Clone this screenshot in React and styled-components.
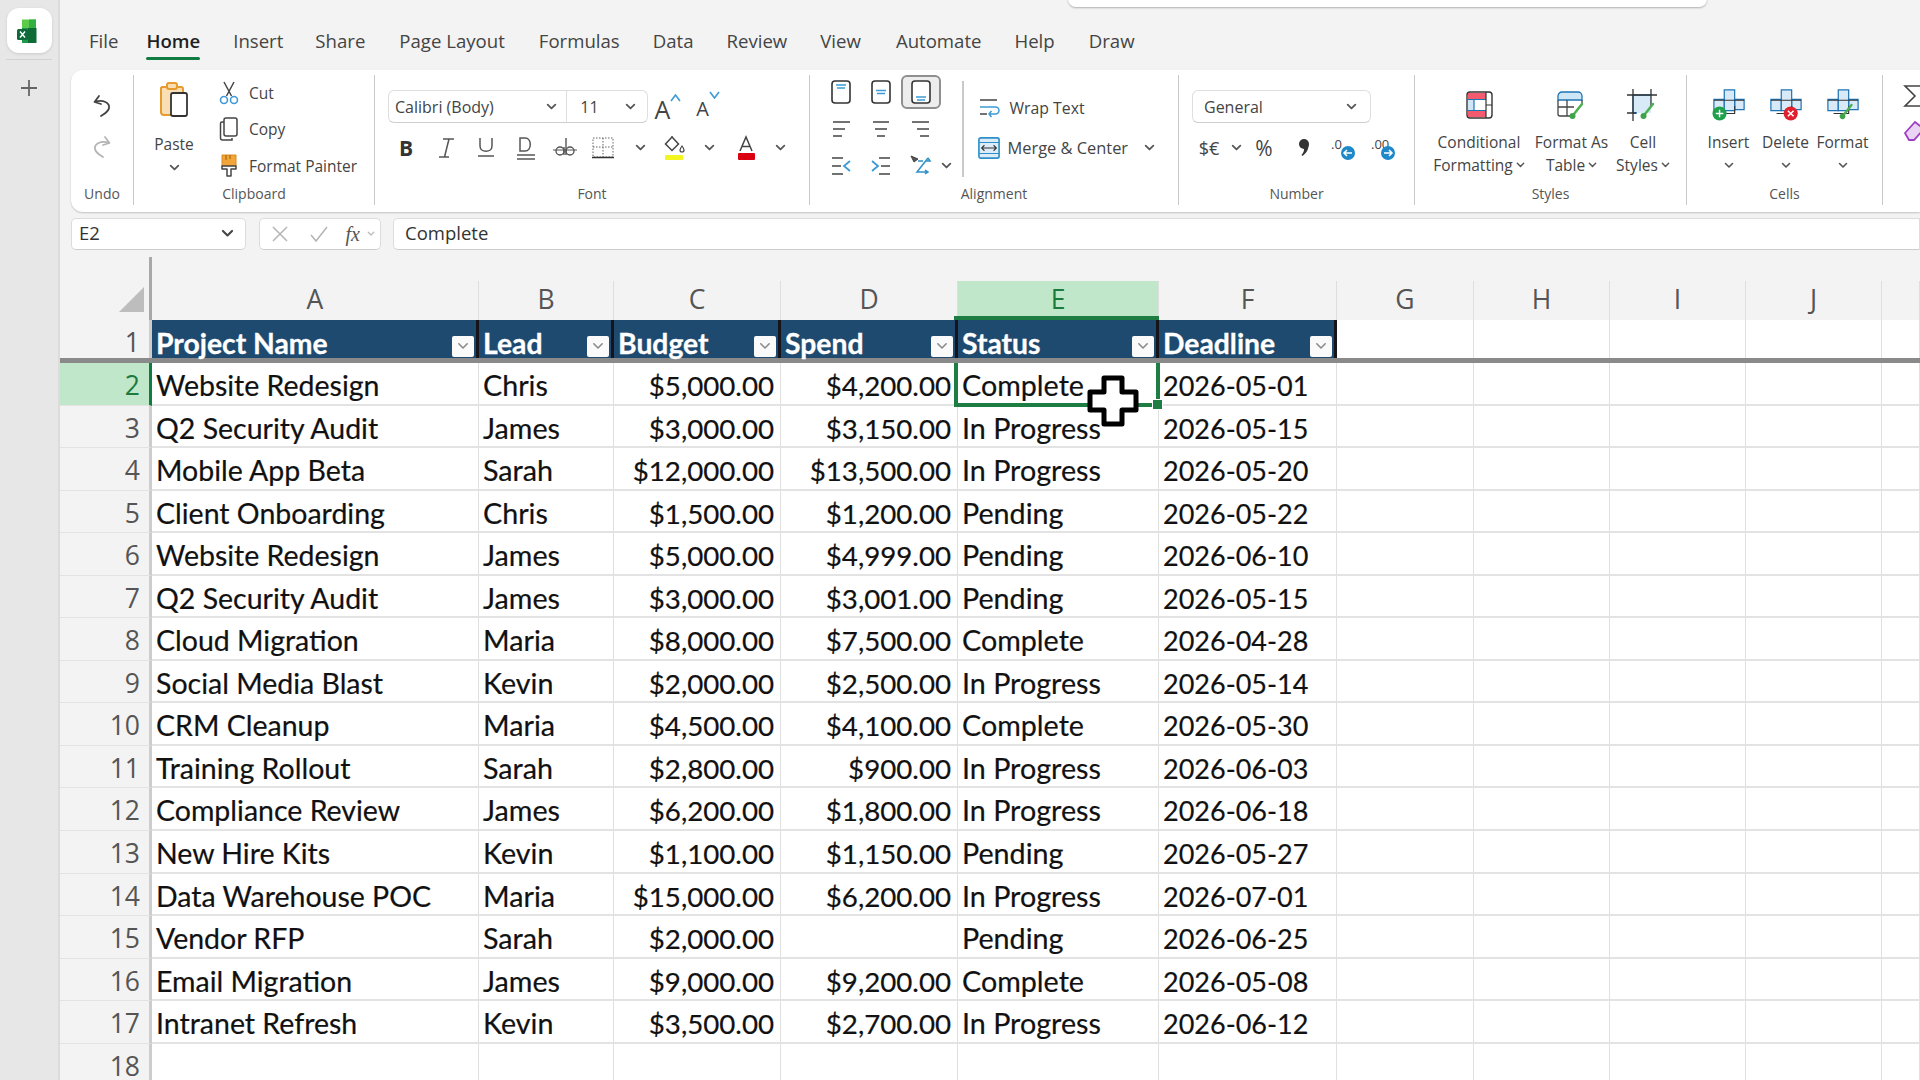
import React from "react";
import styled, { createGlobalStyle } from "styled-components";

const Global = createGlobalStyle`
  html, body { margin: 0; padding: 0; background: #f3f3f3; overflow: hidden; }
  * { box-sizing: border-box; }
  #root { width: 1920px; height: 1080px; }
`;
const UI = `"Open Sans", "Noto Sans", sans-serif`;
const CELL = `Lato, "Liberation Sans", sans-serif`;
const COLS = "92px 327px 135px 167px 177px 201px 178px 137px 136px 136px 136px 1fr";

const Page = styled.div`
  position: relative; display: flex; width: 1920px; height: 1080px; overflow: hidden;
  font-family: ${UI}; background: #f3f3f3; color: #333;
`;
const Sidebar = styled.aside`
  width: 60px; flex: none; background: #e7e7e7; border-right: 2px solid #dcdcdc;
  display: flex; flex-direction: column; align-items: center; padding-top: 8px;
`;
const AppTile = styled.div`
  width: 45px; height: 45px; background: #fff; border-radius: 12px; display: flex;
  align-items: center; justify-content: center; box-shadow: 0 1px 3px rgba(0,0,0,.12);
`;
const SideRule = styled.div`width: 46px; height: 1px; background: #d2d2d2; margin-top: 6px;`;
const AddButton = styled.div`margin-top: 19px; color: #6b6b6b; display: flex;`;
const Main = styled.main`flex: 1; min-width: 0; display: flex; flex-direction: column;`;
const TopPopup = styled.div`
  position: absolute; left: 1068px; top: -10px; width: 639px; height: 17px; background: #fff;
  border-radius: 8px; box-shadow: 0 1px 2px rgba(0,0,0,.28);
`;
const TabBar = styled.nav`height: 70px; padding: 28px 0 0 29px; display: flex; flex: none;`;
const Tab = styled.div`
  position: relative; height: 26px; line-height: 26px; margin-right: ${p => p.$gap}px; font-size: 18.6px;
  color: ${p => (p.$active ? "#1f1f1f" : "#444")}; font-weight: ${p => (p.$active ? 600 : 400)};
  &::after {
    content: ""; display: ${p => (p.$active ? "block" : "none")}; position: absolute; left: 0; right: 0; bottom: -6px;
    height: 3px; background: #107c41; border-radius: 2px;
  }
`;
const Ribbon = styled.section`
  flex: none; margin-left: 11px; height: 142px; padding: 5px 0 7px; background: #fff; display: flex;
  border-radius: 12px 0 0 12px; box-shadow: 0 1px 2px rgba(0,0,0,.2); overflow: hidden;
`;
const Group = styled.div`
  flex: none; width: ${p => p.$w}px; display: flex; flex-direction: column;
  border-right: ${p => (p.$last ? "none" : "1.5px solid #c9c9c9")};
`;
const GroupBody = styled.div`height: 108px; display: flex; padding-left: ${p => p.$pl || 0}px;`;
const GroupLabel = styled.div`height: 22px; line-height: 22px; text-align: center; font-size: 14px; color: #555;`;
const UndoColumn = styled.div`flex: 1; display: flex; flex-direction: column; align-items: center; padding-top: 16px; gap: 11px;`;
const IconSlot = styled.div`
  flex: none; width: ${p => p.$w || 30}px; height: ${p => p.$h || 30}px; display: flex; align-items: center; justify-content: center;
`;
const PasteButton = styled.div`width: 80px; flex: none; display: flex; flex-direction: column; align-items: center; padding-top: 5px;`;
const PasteIconSlot = styled.div`height: 40px; margin-bottom: 13px; display: flex; align-items: center;`;
const BigLabel = styled.div`font-size: 15.5px; line-height: 23px; color: #444; text-align: center; white-space: nowrap;`;
const SmallStack = styled.div`display: flex; flex-direction: column; gap: 3.5px; padding: 1px 0 0 5px;`;
const SmallRow = styled.div`height: 34px; display: flex; align-items: center; gap: 10px; font-size: 15.5px; color: #444; white-space: nowrap;`;
const Column = styled.div`display: flex; flex-direction: column;`;
const SelectRow = styled.div`display: flex; margin-top: 15px; height: 33px; align-items: center;`;
const FieldBox = styled.div`
  width: ${p => p.$w}px; height: 33px; display: flex; background: #fff; border: 1.5px solid #dedede; border-radius: 6px;
  border-bottom-color: #cfcfcf; font-size: 16px; color: #444;
`;
const FieldPart = styled.div`
  width: ${p => p.$w}px; display: flex; align-items: center; justify-content: space-between;
  padding: 0 ${p => p.$pr || 9}px 0 ${p => p.$pl || 6}px; border-right: ${p => (p.$split ? "1.5px solid #dedede" : "none")};
`;
const GrowButton = styled.div`
  flex: none; width: 40px; height: 33px; display: flex; align-items: flex-end; justify-content: center; color: #444;
  font-size: ${p => p.$size}px; line-height: 28px;
`;
const Caret = styled.svg`align-self: flex-start; margin-top: ${p => (p.$up ? 4 : 1)}px;`;
const ToolRow = styled.div`display: flex; height: 40px; margin-top: 5px; align-items: center; margin-left: ${p => p.$ml || 0}px;`;
const AlignGrid = styled.div`
  display: grid; grid-template-columns: repeat(3, 40px) 21px; grid-auto-rows: 34px; row-gap: 3px; width: 141px; flex: none;
`;
const AlignCell = styled.div`
  display: flex; align-items: center; justify-content: ${p => p.$start ? "flex-start" : "center"}; border-radius: 6px;
  ${p => p.$active ? "background:#ededed; border:2px solid #8f8f8f;" : ""}
`;
const InnerRule = styled.div`flex: none; width: 1.5px; height: 96px; margin-top: 6px; background: #c9c9c9;`;
const WrapColumn = styled.div`flex: 1; display: flex; flex-direction: column; padding: 12.5px 23px 0 14px;`;
const WrapRow = styled.div`height: 40px; display: flex; align-items: center; font-size: ${p => p.$size}px; color: #444; gap: ${p => p.$gap}px; white-space: nowrap;`;
const PushEnd = styled.div`margin-left: auto; display: flex;`;
const BigButton = styled.div`
  flex: none; width: ${p => p.$w}px; display: flex; flex-direction: column; align-items: center; padding-top: 13px;
`;
const BigIcon = styled.div`height: 34px; margin-bottom: 9px; display: flex; align-items: center; justify-content: center;`;
const Inline = styled.span`display: inline-flex; align-items: center; gap: 3px;`;
const CenterChevron = styled.div`height: 23px; display: flex; align-items: center; justify-content: center;`;
const EditColumn = styled.div`display: flex; flex-direction: column; padding: 8px 0 0 20px; gap: 9px;`;
const Glyph = styled.span`font-size: ${p => p.$size}px; color: #444;`;
const BoldB = styled.span`font: 700 21px ${UI}; color: #333;`;

const FormulaBar = styled.div`
  flex: none; margin: 6px 0 0 11px; height: 32px; display: flex; gap: 12.5px;
`;
const BarBox = styled.div`
  flex: ${p => (p.$fill ? "1" : "none")}; width: ${p => p.$w ? p.$w + "px" : "auto"}; background: #fff;
  border-radius: ${p => (p.$fill ? "5px 0 0 5px" : "5px")}; border: 1.5px solid #dcdcdc; border-bottom-color: #cccccc;
  display: flex; align-items: center; font-size: 18.5px; color: #333; padding: 0 0 3px ${p => p.$pl || 0}px;
`;
const NameChevron = styled.div`margin: 3px 11px 0 auto; display: flex;`;
const FxRow = styled.div`display: flex; align-items: center; margin-top: 3px;`;
const FxGlyph = styled.i`font: italic 20px "Liberation Serif", serif; color: #555; margin-left: 8px; width: 16px;`;

const Sheet = styled.div`flex: 1; min-height: 0; margin-top: 7px; display: flex; flex-direction: column;`;
const HeadRow = styled.div`display: grid; grid-template-columns: ${COLS}; height: 63px; flex: none;`;
const Corner = styled.div`
  border-right: 3px solid #a8a8a8; display: flex; align-items: flex-end; justify-content: flex-end; padding: 0 5px 8px 0;
`;
const Triangle = styled.div`
  width: 25px; height: 25px; background: #bdbdbd; clip-path: polygon(100% 0, 100% 100%, 0 100%);
`;
const ColHead = styled.div`
  align-self: end; height: 39px; line-height: 37px; text-align: center; font-size: 26.5px;
  border-right: 1.5px solid #dedede; white-space: nowrap;
  color: ${p => (p.$active ? "#1c7a3f" : "#555")}; background: ${p => (p.$active ? "#c1e7cb" : "transparent")};
`;
const Row = styled.div`
  display: grid; grid-template-columns: ${COLS}; grid-template-rows: minmax(0, 1fr); height: ${p => p.$h}px; flex: none; min-height: 0;
  ${p => p.$freeze ? "border-bottom: 5px solid #8a8a8a; position: relative; z-index: 1;" : ""}
`;
const RowNum = styled.div`
  min-height: 0; text-align: right; padding-right: 9px; font-size: 26.5px; line-height: ${p => p.$lh || 44}px;
  color: ${p => (p.$active ? "#1c7a3f" : "#555")};
  background: ${p => (p.$active ? "#c1e7cb" : "transparent")};
  border-bottom: ${p => p.$flat ? "none" : "1.5px solid #e3e3e3"};
  border-right: 3px solid ${p => (p.$active ? "#107c41" : "#cdcdcd")};
`;
const Cell = styled.div`
  position: relative; min-height: 0; background: #fff; border-right: 1.5px solid #e0e0e0; border-bottom: 2px solid #e3e3e3;
  font: 400 ${p => p.$size || 28.7}px/45px ${CELL}; color: #111; white-space: nowrap; padding: 0 6px 0 4px;
  -webkit-text-stroke: .2px #111;
  text-align: ${p => (p.$right ? "right" : "left")};
`;
const HeadCell = styled.div`
  position: relative; min-height: 0; background: #1f4a70; border-right: 3px solid #14141a; color: #fff;
  font: 700 28.3px/47px ${CELL}; white-space: nowrap; padding: 0 6px 0 4px; -webkit-text-stroke: .3px #fff;
  ${p => p.$topline ? `&::before { content:""; position:absolute; left:-4px; right:-3px; top:-4px; height:4px; background:#1e7d42; }` : ""}
`;
const BlankHead = styled.div`background: #fff; border-right: 1.5px solid #e0e0e0;`;
const FilterButton = styled.div`
  position: absolute; right: 2px; bottom: 1px; width: 22px; height: 21px; background: #fafafa; border-radius: 2px;
  display: flex; align-items: center; justify-content: center;
`;
const Selection = styled.div`
  position: absolute; left: -4px; right: -2px; top: 0; bottom: -3px; border: 4px solid #1e7d42; border-top: none; pointer-events: none; z-index: 2;
`;
const Handle = styled.div`
  position: absolute; right: -6px; bottom: -6px; width: 9px; height: 9px; background: #1e7d42; outline: 1px solid #fff;
`;
const Cursor = styled.svg`position: absolute; left: 1087px; top: 375px; z-index: 5; filter: blur(.3px);`;

/* --- icons --- */
const Chev = ({ s = 11, c = "#555", w = 1.6 }) => (
  <svg width={s} height={s * 0.7} viewBox="0 0 10 7"><path d="M1.5 1.5 5 5 8.5 1.5" fill="none" stroke={c} strokeWidth={w} strokeLinecap="round" strokeLinejoin="round" /></svg>
);
const Excel = () => (
  <svg width="26" height="26" viewBox="0 0 26 26">
    <path d="M6 1.5h14v9H6z" fill="#5ccb4a" />
    <path d="M13 1.5h7v9h-7z" fill="#33b044" />
    <path d="M6 10h8v15H6z" fill="#1f9a48" />
    <path d="M12 10h8.500v15H12z" fill="#0f6b36" />
    <rect x="1" y="11" width="11" height="11" rx="1.500" fill="#0e6a3a" />
    <path d="M4 13.500 9 19.500M9 13.500 4 19.500" stroke="#fff" strokeWidth="1.400" />
  </svg>
);
const Plus = () => <svg width="18" height="18" viewBox="0 0 18 18"><path d="M9 1v16M1 9h16" stroke="#666" strokeWidth="1.800" /></svg>;
const Undo = ({ c = "#444", flip }) => (
  <svg width="24" height="26" viewBox="0 0 24 26" style={flip ? { transform: "scaleX(-1)" } : undefined}>
    <path d="M9 3 4.500 9l6.500 2M5 9c8-3 15 1 14 6-.7 4-5 6-8 8" fill="none" stroke={c} strokeWidth="1.800" strokeLinecap="round" strokeLinejoin="round" />
  </svg>
);
const PasteIcon = () => (
  <svg width="30" height="38" viewBox="0 0 30 38">
    <path d="M3 6h19a2 2 0 0 1 2 2v24a2 2 0 0 1-2 2H5a3 3 0 0 1-3-3V7z" fill="#f9dfb3" stroke="#e79a2d" strokeWidth="2" />
    <rect x="8" y="2" width="10" height="6" rx="2" fill="#f9dfb3" stroke="#e79a2d" strokeWidth="2" />
    <rect x="12" y="12" width="16" height="23" rx="2" fill="#fff" stroke="#333" strokeWidth="1.800" />
  </svg>
);
const CutIcon = () => (
  <svg width="20" height="24" viewBox="0 0 20 24">
    <path d="M5 1 12.500 15M15 1 7.500 15" stroke="#444" strokeWidth="1.500" fill="none" />
    <circle cx="5" cy="19" r="3.500" fill="none" stroke="#3d9ad6" strokeWidth="1.600" />
    <circle cx="15" cy="19" r="3.500" fill="none" stroke="#3d9ad6" strokeWidth="1.600" />
  </svg>
);
const CopyIcon = () => (
  <svg width="20" height="24" viewBox="0 0 20 24" fill="none" stroke="#444" strokeWidth="1.500">
    <rect x="5" y="1" width="13" height="18" rx="2" />
    <path d="M5 5H3a1.500 1.500 0 0 0-1.500 1.500V21A2 2 0 0 0 3.500 23H13v-2" />
  </svg>
);
const PainterIcon = () => (
  <svg width="20" height="24" viewBox="0 0 20 24">
    <path d="M3 1h14v11H3z" fill="#f2a63a" stroke="#d98a20" strokeWidth="1" />
    <path d="M7 1v5M11 1v4" stroke="#a86a10" strokeWidth="1.200" />
    <path d="M3 12h14v3H12v7H8v-7H3z" fill="#fff" stroke="#444" strokeWidth="1.500" strokeLinejoin="round" />
  </svg>
);
const GrowA = ({ up, size }) => (
  <GrowButton $size={size}>
    A
    <Caret $up={up} width="11" height="8" viewBox="0 0 11 8">
      <path d={up ? "M1 7l4.500-6L10 7" : "M1 1l4.500 6L10 1"} fill="none" stroke="#3d9ad6" strokeWidth="1.600" />
    </Caret>
  </GrowButton>
);
const Ital = () => (
  <svg width="22" height="24" viewBox="0 0 22 24"><path d="M7 3h11M13 3 8.500 21M3 21h10" fill="none" stroke="#555" strokeWidth="1.500" /></svg>
);
const Under = ({ dbl, letter }) => (
  <svg width="20" height="26" viewBox="0 0 20 26" fill="none" stroke="#555" strokeWidth="1.500">
    {letter === "D"
      ? <path d="M4 3v13h5c7 0 7-13 0-13z" />
      : <path d="M4 3v8c0 7 12 7 12 0V3" />}
    <path d={dbl ? "M1 20h18M1 24h18" : "M2 21h16"} />
  </svg>
);
const Strike = () => (
  <svg width="26" height="24" viewBox="0 0 26 24" fill="none" stroke="#555" strokeWidth="1.400">
    <circle cx="8" cy="15" r="4" /><path d="M12 11v8" /><circle cx="18" cy="15" r="4" /><path d="M14 2v17" />
    <path d="M1 14h24" strokeWidth="1.200" />
  </svg>
);
const Borders = () => (
  <svg width="22" height="22" viewBox="0 0 22 22" fill="none" stroke="#666" strokeWidth="1" strokeDasharray="1.500 1.500">
    <rect x="1" y="1" width="20" height="19" /><path d="M11 1v19M1 10h20" /><path d="M0 20.500h22" stroke="#333" strokeWidth="1.500" strokeDasharray="none" />
  </svg>
);
const FillIcon = () => (
  <svg width="22" height="26" viewBox="0 0 22 26">
    <path d="M8 2 14.500 9 8 15.500 1.500 9zM8 2l0-1" fill="none" stroke="#444" strokeWidth="1.500" />
    <path d="M18 11c-1.500 2-2 3-2 4a2 2 0 0 0 4 0c0-1-.5-2-2-4z" fill="none" stroke="#444" strokeWidth="1.200" />
    <rect x="1" y="20" width="18" height="5" rx="1" fill="#f3f51f" />
  </svg>
);
const ColorA = () => (
  <svg width="20" height="26" viewBox="0 0 20 26">
    <path d="M4 16 10 2l6 14M6 11.500h8" fill="none" stroke="#444" strokeWidth="1.500" />
    <rect x="2" y="18" width="17" height="7" rx="1" fill="#db0011" />
  </svg>
);
const VAlign = ({ pos }) => (
  <svg width="20" height="24" viewBox="0 0 20 24">
    <rect x="1" y="1" width="18" height="22" rx="3" fill="#fff" stroke="#333" strokeWidth="1.600" />
    <path d={pos === 0 ? "M5 5h10M6 8h8" : pos === 1 ? "M5 10.500h10M6 13.500h8" : "M5 17h10M6 20h8"} stroke="#3d9ad6" strokeWidth="1.500" />
  </svg>
);
const HAlign = ({ pos }) => {
  const l = pos === 0 ? "M2 4h17M2 11h12M2 18h9" : pos === 1 ? "M2 4h16M4 11h12M6 18h8" : "M1 4h17M6 11h12M9 18h9";
  return <svg width="20" height="22" viewBox="0 0 20 22"><path d={l} stroke="#444" strokeWidth="1.500" fill="none" /></svg>;
};
const Indent = ({ inc }) => (
  <svg width="22" height="22" viewBox="0 0 22 22" fill="none" strokeWidth="1.500">
    {inc ? (<>
      <path d="M9 3h11M11 11h9M9 19h11" stroke="#444" />
      <path d="M2 6l6 5-6 5" stroke="#3d9ad6" strokeWidth="1.800" />
    </>) : (<>
      <path d="M2 3h11M2 11h9M2 19h11" stroke="#444" />
      <path d="M20 6l-6 5 6 5" stroke="#3d9ad6" strokeWidth="1.800" />
    </>)}
  </svg>
);
const Orient = () => (
  <svg width="24" height="24" viewBox="0 0 24 24" fill="none" strokeWidth="1.500">
    <path d="M2 2l7 3-4 3z" fill="#555" stroke="#444" strokeWidth="1" />
    <path d="M9 7 14 7M19 4 8 18h11M16 20l3-2-3-2M17 7h4l-2-3" stroke="#2e90c8" />
  </svg>
);
const WrapIcon = () => (
  <svg width="22" height="20" viewBox="0 0 22 20" fill="none" strokeWidth="1.500">
    <path d="M2 2h17M2 16h7" stroke="#444" /><path d="M2 9h15.500a3.500 3.500 0 0 1 0 7H11M13.500 13 11 16l2.500 3" stroke="#3d9ad6" />
  </svg>
);
const MergeIcon = () => (
  <svg width="24" height="24" viewBox="0 0 24 24" fill="none">
    <rect x="1" y="1" width="22" height="22" rx="2" fill="#dcecf8" stroke="#2e90c8" strokeWidth="1.800" />
    <path d="M1 6h22M1 18h22" stroke="#2e90c8" strokeWidth="1.200" />
    <path d="M4 12h16M7 9l-3 3 3 3M17 9l3 3-3 3" stroke="#333" strokeWidth="1.200" />
  </svg>
);
const Comma = () => (
  <svg width="14" height="20" viewBox="0 0 14 20">
    <circle cx="7" cy="6" r="5" fill="#333" />
    <path d="M11.500 6c.5 5-2 9-6 12l-1-1c2-2 3-5 2.500-8z" fill="#333" />
  </svg>
);
const Decimal = ({ t, dir }) => (
  <svg width="30" height="28" viewBox="0 0 30 28">
    <text x="1" y="15" fontFamily={UI} fontSize="13" fill="#444">{t}</text>
    <circle cx="18" cy="19" r="7" fill="#1e88c8" />
    <path d={dir < 0 ? "M22 19h-8M17 16l-3 3 3 3" : "M14 19h8M19 16l3 3-3 3"} fill="none" stroke="#fff" strokeWidth="1.500" />
  </svg>
);
const CondIcon = () => (
  <svg width="27" height="28" viewBox="0 0 27 28">
    <rect x="1" y="1" width="25" height="26" rx="3" fill="#fff" stroke="#333" strokeWidth="1.400" />
    <path d="M2 2h18v6H2zM2 20h18v6H2z" fill="#f45b6e" />
    <path d="M2 9h6v10H2z" fill="#cfe6f7" />
    <path d="M1 8.500h19M1 19.500h19M8 8.500v11" stroke="#1f74b5" strokeWidth="1.200" />
    <path d="M20 1v26M20 14h6" stroke="#333" strokeWidth="1.200" />
  </svg>
);
const Brush = ({ x = 0, y = 0 }) => (
  <g transform={`translate(${x} ${y})`}>
    <path d="M13 1 5 11" stroke="#4caf50" strokeWidth="2.500" strokeLinecap="round" />
    <circle cx="3.500" cy="13" r="3" fill="#3fa34a" />
  </g>
);
const TableIcon = () => (
  <svg width="30" height="30" viewBox="0 0 30 30">
    <path d="M1 6a4 4 0 0 1 4-4h16a4 4 0 0 1 4 4v4H1z" fill="#cfe6f7" stroke="#1f74b5" strokeWidth="1.300" />
    <path d="M1 10v14a2 2 0 0 0 2 2h10M25 10v3M1 17h16M10 10v16" fill="none" stroke="#444" strokeWidth="1.300" />
    <Brush x={12} y={13} />
  </svg>
);
const StylesIcon = () => (
  <svg width="32" height="32" viewBox="0 0 32 32">
    <rect x="6" y="6" width="18" height="18" fill="#d8eaf8" />
    <path d="M6 6h18M6 24h4M6 6v18" fill="none" stroke="#1f74b5" strokeWidth="1.300" />
    <path d="M0 6h30M24 0v17M6 0v32M0 24h9" fill="none" stroke="#333" strokeWidth="1.300" />
    <Brush x={13} y={14} />
  </svg>
);
const CrossBase = ({ children }) => (
  <svg width="34" height="34" viewBox="0 0 36 36">
    <path d="M13 12H2v12h11zM24 12h10v11H24z" fill="#d8eaf8" stroke="#1f74b5" strokeWidth="1.300" />
    <path d="M13 2h11v22H13z" fill="#d8eaf8" stroke="#1f74b5" strokeWidth="1.300" />
    <path d="M2 13h32M8 27h16v-8" fill="none" stroke="#333" strokeWidth="1.200" />
    {children}
  </svg>
);
const InsertIcon = () => (
  <CrossBase>
    <circle cx="8" cy="27" r="7.500" fill="#1ea14a" />
    <path d="M8 23v8M4 27h8" stroke="#fff" strokeWidth="1.500" />
  </CrossBase>
);
const DeleteIcon = () => (
  <CrossBase>
    <circle cx="23" cy="27" r="7.500" fill="#e0202f" />
    <path d="M20 24l6 6M26 24l-6 6" stroke="#fff" strokeWidth="1.600" />
  </CrossBase>
);
const FormatIcon = () => (
  <CrossBase><Brush x={14} y={17} /></CrossBase>
);
const Sigma = () => <svg width="26" height="24" viewBox="0 0 26 24"><path d="M22 2H2l10 10L2 22h20" fill="none" stroke="#444" strokeWidth="1.600" /></svg>;
const Eraser = () => (
  <svg width="26" height="24" viewBox="0 0 26 24">
    <path d="M2 14 12 3l9 7-10 11H6z" fill="#e9d5f3" stroke="#a13fc4" strokeWidth="1.800" />
  </svg>
);

/* --- data --- */
const TABS = [
  ["File", 28], ["Home", 33], ["Insert", 32], ["Share", 34], ["Page Layout", 34], ["Formulas", 33], ["Data", 33],
  ["Review", 33], ["View", 35], ["Automate", 33], ["Help", 34], ["Draw", 0],
];
const LETTERS = ["A", "B", "C", "D", "E", "F", "G", "H", "I", "J", ""];
const HEADERS = ["Project Name", "Lead", "Budget", "Spend", "Status", "Deadline"];
const DATA = [
  ["Website Redesign", "Chris", "$5,000.00", "$4,200.00", "Complete", "2026-05-01"],
  ["Q2 Security Audit", "James", "$3,000.00", "$3,150.00", "In Progress", "2026-05-15"],
  ["Mobile App Beta", "Sarah", "$12,000.00", "$13,500.00", "In Progress", "2026-05-20"],
  ["Client Onboarding", "Chris", "$1,500.00", "$1,200.00", "Pending", "2026-05-22"],
  ["Website Redesign", "James", "$5,000.00", "$4,999.00", "Pending", "2026-06-10"],
  ["Q2 Security Audit", "James", "$3,000.00", "$3,001.00", "Pending", "2026-05-15"],
  ["Cloud Migration", "Maria", "$8,000.00", "$7,500.00", "Complete", "2026-04-28"],
  ["Social Media Blast", "Kevin", "$2,000.00", "$2,500.00", "In Progress", "2026-05-14"],
  ["CRM Cleanup", "Maria", "$4,500.00", "$4,100.00", "Complete", "2026-05-30"],
  ["Training Rollout", "Sarah", "$2,800.00", "$900.00", "In Progress", "2026-06-03"],
  ["Compliance Review", "James", "$6,200.00", "$1,800.00", "In Progress", "2026-06-18"],
  ["New Hire Kits", "Kevin", "$1,100.00", "$1,150.00", "Pending", "2026-05-27"],
  ["Data Warehouse POC", "Maria", "$15,000.00", "$6,200.00", "In Progress", "2026-07-01"],
  ["Vendor RFP", "Sarah", "$2,000.00", "", "Pending", "2026-06-25"],
  ["Email Migration", "James", "$9,000.00", "$9,200.00", "Complete", "2026-05-08"],
  ["Intranet Refresh", "Kevin", "$3,500.00", "$2,700.00", "In Progress", "2026-06-12"],
  ["", "", "", "", "", ""],
];
const BLANKS = [0, 1, 2, 3, 4];
const COL_SIZE = [28.5, 28.7, 27.7, 27.7, 28.7, 27];

const FontRow = [
  [40, <BoldB key="b">B</BoldB>], [41, <Ital key="i" />], [38, <Under key="u" />], [42, <Under key="d" dbl letter="D" />],
  [36, <Strike key="s" />], [40, <Borders key="bd" />], [34, <Chev key="c1" />], [36, <FillIcon key="f" />],
  [32, <Chev key="c2" />], [42, <ColorA key="a" />], [26, <Chev key="c3" />],
];
const NumRow = [
  [34, <Glyph key="d" $size={18}>$€</Glyph>], [20, <Chev key="c" />],
  [36, <Glyph key="p" $size={21}>%</Glyph>], [44, <Comma key="m" />],
  [38, <Decimal key="l" t=".0" dir={-1} />], [42, <Decimal key="r" t=".00" dir={1} />],
];

export default function App() {
  return (
    <>
      <Global />
      <Page>
        <Sidebar>
          <AppTile><Excel /></AppTile>
          <SideRule />
          <AddButton><Plus /></AddButton>
        </Sidebar>
        <Main>
          <TopPopup />
          <TabBar>
            {TABS.map(([t, g]) => <Tab key={t} $gap={g} $active={t === "Home"}>{t}</Tab>)}
          </TabBar>
          <Ribbon>
            <Group $w={63}>
              <GroupBody>
                <UndoColumn>
                  <IconSlot><Undo /></IconSlot>
                  <IconSlot><Undo c="#b5b5b5" flip /></IconSlot>
                </UndoColumn>
              </GroupBody>
              <GroupLabel>Undo</GroupLabel>
            </Group>
            <Group $w={241}>
              <GroupBody>
                <PasteButton>
                  <PasteIconSlot><PasteIcon /></PasteIconSlot>
                  <BigLabel>Paste</BigLabel>
                  <CenterChevron><Chev /></CenterChevron>
                </PasteButton>
                <SmallStack>
                  <SmallRow><IconSlot $w={20} $h={24}><CutIcon /></IconSlot>Cut</SmallRow>
                  <SmallRow><IconSlot $w={20} $h={24}><CopyIcon /></IconSlot>Copy</SmallRow>
                  <SmallRow><IconSlot $w={20} $h={24}><PainterIcon /></IconSlot>Format Painter</SmallRow>
                </SmallStack>
              </GroupBody>
              <GroupLabel>Clipboard</GroupLabel>
            </Group>
            <Group $w={435}>
              <GroupBody $pl={13}>
                <Column>
                  <SelectRow>
                    <FieldBox $w={260}>
                      <FieldPart $w={179} $split>Calibri (Body)<Chev /></FieldPart>
                      <FieldPart $w={80} $pl={13} $pr={11}>11<Chev /></FieldPart>
                    </FieldBox>
                    <GrowA up size={25} />
                    <GrowA size={20} />
                  </SelectRow>
                  <ToolRow $ml={-2}>
                    {FontRow.map(([w, ic], i) => <IconSlot key={i} $w={w} $h={30}>{ic}</IconSlot>)}
                  </ToolRow>
                </Column>
              </GroupBody>
              <GroupLabel>Font</GroupLabel>
            </Group>
            <Group $w={369}>
              <GroupBody $pl={11}>
                <AlignGrid>
                  <AlignCell><VAlign pos={0} /></AlignCell>
                  <AlignCell><VAlign pos={1} /></AlignCell>
                  <AlignCell $active><VAlign pos={2} /></AlignCell>
                  <span />
                  <AlignCell><HAlign pos={0} /></AlignCell>
                  <AlignCell><HAlign pos={1} /></AlignCell>
                  <AlignCell><HAlign pos={2} /></AlignCell>
                  <span />
                  <AlignCell><Indent /></AlignCell>
                  <AlignCell><Indent inc /></AlignCell>
                  <AlignCell><Orient /></AlignCell>
                  <AlignCell $start><Chev /></AlignCell>
                </AlignGrid>
                <InnerRule />
                <WrapColumn>
                  <WrapRow $gap={10} $size={15.8}><IconSlot $w={22} $h={22}><WrapIcon /></IconSlot>Wrap Text</WrapRow>
                  <WrapRow $gap={8} $size={16.4}><IconSlot $w={22} $h={24}><MergeIcon /></IconSlot>Merge &amp; Center<PushEnd><Chev /></PushEnd></WrapRow>
                </WrapColumn>
              </GroupBody>
              <GroupLabel>Alignment</GroupLabel>
            </Group>
            <Group $w={236}>
              <GroupBody $pl={13}>
                <Column>
                  <SelectRow>
                    <FieldBox $w={179}><FieldPart $w={176} $pl={11} $pr={12}>General<Chev /></FieldPart></FieldBox>
                  </SelectRow>
                  <ToolRow>
                    {NumRow.map(([w, ic], i) => <IconSlot key={i} $w={w} $h={30}>{ic}</IconSlot>)}
                  </ToolRow>
                </Column>
              </GroupBody>
              <GroupLabel>Number</GroupLabel>
            </Group>
            <Group $w={272}>
              <GroupBody $pl={10}>
                <BigButton $w={108}>
                  <BigIcon><CondIcon /></BigIcon>
                  <BigLabel>Conditional</BigLabel>
                  <BigLabel><Inline>Formatting <Chev s={9} /></Inline></BigLabel>
                </BigButton>
                <BigButton $w={77}>
                  <BigIcon><TableIcon /></BigIcon>
                  <BigLabel>Format As</BigLabel>
                  <BigLabel><Inline>Table <Chev s={9} /></Inline></BigLabel>
                </BigButton>
                <BigButton $w={66}>
                  <BigIcon><StylesIcon /></BigIcon>
                  <BigLabel>Cell</BigLabel>
                  <BigLabel><Inline>Styles <Chev s={9} /></Inline></BigLabel>
                </BigButton>
              </GroupBody>
              <GroupLabel>Styles</GroupLabel>
            </Group>
            <Group $w={196}>
              <GroupBody $pl={13}>
                {[["Insert", <InsertIcon key="a" />], ["Delete", <DeleteIcon key="b" />], ["Format", <FormatIcon key="c" />]].map(([t, ic]) => (
                  <BigButton key={t} $w={57}>
                    <BigIcon>{ic}</BigIcon>
                    <BigLabel>{t}</BigLabel>
                    <CenterChevron><Chev s={10} /></CenterChevron>
                  </BigButton>
                ))}
              </GroupBody>
              <GroupLabel>Cells</GroupLabel>
            </Group>
            <Group $w={60} $last>
              <EditColumn>
                <IconSlot $w={26} $h={26}><Sigma /></IconSlot>
                <IconSlot $w={26} $h={26}><Eraser /></IconSlot>
              </EditColumn>
            </Group>
          </Ribbon>
          <FormulaBar>
            <BarBox $w={175} $pl={7}>E2<NameChevron><Chev s={13} c="#444" /></NameChevron></BarBox>
            <BarBox $w={122}>
              <FxRow>
                <IconSlot $w={40} $h={28}>
                  <svg width="18" height="18" viewBox="0 0 18 18"><path d="M2 2l14 14M16 2 2 16" stroke="#b4b4b4" strokeWidth="1.500" /></svg>
                </IconSlot>
                <IconSlot $w={38} $h={28}>
                  <svg width="20" height="18" viewBox="0 0 20 18"><path d="M2 10l5 6L18 2" fill="none" stroke="#b4b4b4" strokeWidth="1.500" /></svg>
                </IconSlot>
                <FxGlyph>fx</FxGlyph>
                <IconSlot $w={18} $h={28}><Chev s={8} c="#bbb" /></IconSlot>
              </FxRow>
            </BarBox>
            <BarBox $fill $pl={11}>Complete</BarBox>
          </FormulaBar>
          <Sheet>
            <HeadRow>
              <Corner><Triangle /></Corner>
              {LETTERS.map((l, i) => <ColHead key={i} $active={l === "E"}>{l}</ColHead>)}
            </HeadRow>
            <Row $h={43} $freeze>
              <RowNum $flat $lh={44}>1</RowNum>
              {HEADERS.map((h, i) => (
                <HeadCell key={h} $topline={i === 4}>{h}
                  <FilterButton><Chev s={12} c="#8a8a8a" w={1.300} /></FilterButton>
                </HeadCell>
              ))}
              {BLANKS.map(b => <BlankHead key={b} />)}
            </Row>
            {DATA.map((r, i) => (
              <Row key={i} $h={42.55}>
                <RowNum $active={i === 0}>{i + 2}</RowNum>
                {r.map((v, j) => (
                  <Cell key={j} $size={COL_SIZE[j]} $right={j === 2 || j === 3}>
                    {v}
                    {i === 0 && j === 4 && <Selection><Handle /></Selection>}
                  </Cell>
                ))}
                {BLANKS.map(b => <Cell key={b} />)}
              </Row>
            ))}
          </Sheet>
        </Main>
        <Cursor width="52" height="52" viewBox="0 0 52 52">
          <path d="M17 3h18v14h14v18H35v14H17V35H3V17h14z" fill="#fff" stroke="#000" strokeWidth="5" strokeLinejoin="round" />
        </Cursor>
      </Page>
    </>
  );
}
